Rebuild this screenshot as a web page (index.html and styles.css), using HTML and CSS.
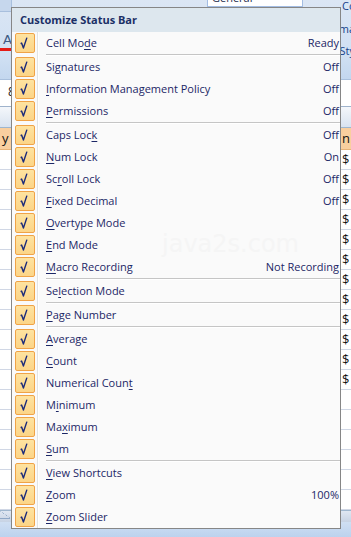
FILE: index.html
```html
<!DOCTYPE html>
<html lang="en">
<head>
  <meta charset="UTF-8">
  <meta name="viewport" content="width=device-width, initial-scale=1.0">
  <title>Customize Status Bar</title>
  <link rel="stylesheet" href="styles.css">
</head>
<body>
  <!-- worksheet behind the context menu -->
  <div class="excel">
    <div class="ribbon">
      <div class="rb-left">
        <div class="rb-btn"></div>
        <div class="font-color">A</div>
        <div class="font-bar"></div>
      </div>
      <div class="rb-mid">
        <div class="combo"><span>General</span><span class="arrow">▼</span></div>
      </div>
      <div class="rb-right">
        <div class="rb-text t1">Conditional Formatting</div>
        <div class="rb-text t2">Format as Table</div>
        <div class="rb-text t3">Cell Styles</div>
      </div>
    </div>

    <div class="formula-row">
      <span class="name-box">8</span>
    </div>
    <div class="col-headers"></div>
    <div class="row head-row">
      <span class="cell-l">y</span>
      <span class="cell-r">n</span>
    </div>
    <div class="row"><span class="cell-l"></span><span class="cell-r">$</span></div>
    <div class="row"><span class="cell-l"></span><span class="cell-r">$</span></div>
    <div class="row"><span class="cell-l"></span><span class="cell-r">$</span></div>
    <div class="row"><span class="cell-l"></span><span class="cell-r">$</span></div>
    <div class="row"><span class="cell-l"></span><span class="cell-r">$</span></div>
    <div class="row"><span class="cell-l"></span><span class="cell-r">$</span></div>
    <div class="row"><span class="cell-l"></span><span class="cell-r">$</span></div>
    <div class="row"><span class="cell-l"></span><span class="cell-r">$</span></div>
    <div class="row"><span class="cell-l"></span><span class="cell-r">$</span></div>
    <div class="row"><span class="cell-l"></span><span class="cell-r">$</span></div>
    <div class="row"><span class="cell-l"></span><span class="cell-r">$</span></div>
    <div class="row"><span class="cell-l"></span><span class="cell-r">$</span></div>
    <div class="row"></div>
    <div class="row"></div>
    <div class="row"></div>
    <div class="row"></div>
    <div class="row"></div>
    <div class="row"></div>
    <div class="tabs-bar"><span class="tab-edge"></span></div>
    <div class="status-bar"></div>
  </div>

  <!-- context menu -->
  <div class="menu">
    <div class="menu-title">Customize Status Bar</div>
    <ul class="menu-list">
      <li class="item"><span class="check"><svg viewBox="0 0 18 18"><path d="M4.6 9.6 L5.6 9.1 L7.4 14 L10.9 3.6"/></svg></span><span class="label">Cell Mo<u>d</u>e</span><span class="value">Ready</span></li>
      <li class="sep"></li>
      <li class="item"><span class="check"><svg viewBox="0 0 18 18"><path d="M4.6 9.6 L5.6 9.1 L7.4 14 L10.9 3.6"/></svg></span><span class="label">Si<u>g</u>natures</span><span class="value">Off</span></li>
      <li class="item"><span class="check"><svg viewBox="0 0 18 18"><path d="M4.6 9.6 L5.6 9.1 L7.4 14 L10.9 3.6"/></svg></span><span class="label"><u>I</u>nformation Management Policy</span><span class="value">Off</span></li>
      <li class="item"><span class="check"><svg viewBox="0 0 18 18"><path d="M4.6 9.6 L5.6 9.1 L7.4 14 L10.9 3.6"/></svg></span><span class="label"><u>P</u>ermissions</span><span class="value">Off</span></li>
      <li class="sep"></li>
      <li class="item"><span class="check"><svg viewBox="0 0 18 18"><path d="M4.6 9.6 L5.6 9.1 L7.4 14 L10.9 3.6"/></svg></span><span class="label">Caps Loc<u>k</u></span><span class="value">Off</span></li>
      <li class="item"><span class="check"><svg viewBox="0 0 18 18"><path d="M4.6 9.6 L5.6 9.1 L7.4 14 L10.9 3.6"/></svg></span><span class="label"><u>N</u>um Lock</span><span class="value">On</span></li>
      <li class="item"><span class="check"><svg viewBox="0 0 18 18"><path d="M4.6 9.6 L5.6 9.1 L7.4 14 L10.9 3.6"/></svg></span><span class="label">Sc<u>r</u>oll Lock</span><span class="value">Off</span></li>
      <li class="item"><span class="check"><svg viewBox="0 0 18 18"><path d="M4.6 9.6 L5.6 9.1 L7.4 14 L10.9 3.6"/></svg></span><span class="label"><u>F</u>ixed Decimal</span><span class="value">Off</span></li>
      <li class="item"><span class="check"><svg viewBox="0 0 18 18"><path d="M4.6 9.6 L5.6 9.1 L7.4 14 L10.9 3.6"/></svg></span><span class="label"><u>O</u>vertype Mode</span></li>
      <li class="item"><span class="check"><svg viewBox="0 0 18 18"><path d="M4.6 9.6 L5.6 9.1 L7.4 14 L10.9 3.6"/></svg></span><span class="label"><u>E</u>nd Mode</span></li>
      <li class="item"><span class="check"><svg viewBox="0 0 18 18"><path d="M4.6 9.6 L5.6 9.1 L7.4 14 L10.9 3.6"/></svg></span><span class="label"><u>M</u>acro Recording</span><span class="value">Not Recording</span></li>
      <li class="sep"></li>
      <li class="item"><span class="check"><svg viewBox="0 0 18 18"><path d="M4.6 9.6 L5.6 9.1 L7.4 14 L10.9 3.6"/></svg></span><span class="label">Se<u>l</u>ection Mode</span></li>
      <li class="sep"></li>
      <li class="item"><span class="check"><svg viewBox="0 0 18 18"><path d="M4.6 9.6 L5.6 9.1 L7.4 14 L10.9 3.6"/></svg></span><span class="label"><u>P</u>age Number</span></li>
      <li class="sep"></li>
      <li class="item"><span class="check"><svg viewBox="0 0 18 18"><path d="M4.6 9.6 L5.6 9.1 L7.4 14 L10.9 3.6"/></svg></span><span class="label"><u>A</u>verage</span></li>
      <li class="item"><span class="check"><svg viewBox="0 0 18 18"><path d="M4.6 9.6 L5.6 9.1 L7.4 14 L10.9 3.6"/></svg></span><span class="label"><u>C</u>ount</span></li>
      <li class="item"><span class="check"><svg viewBox="0 0 18 18"><path d="M4.6 9.6 L5.6 9.1 L7.4 14 L10.9 3.6"/></svg></span><span class="label">Numerical Coun<u>t</u></span></li>
      <li class="item"><span class="check"><svg viewBox="0 0 18 18"><path d="M4.6 9.6 L5.6 9.1 L7.4 14 L10.9 3.6"/></svg></span><span class="label">M<u>i</u>nimum</span></li>
      <li class="item"><span class="check"><svg viewBox="0 0 18 18"><path d="M4.6 9.6 L5.6 9.1 L7.4 14 L10.9 3.6"/></svg></span><span class="label">Ma<u>x</u>imum</span></li>
      <li class="item"><span class="check"><svg viewBox="0 0 18 18"><path d="M4.6 9.6 L5.6 9.1 L7.4 14 L10.9 3.6"/></svg></span><span class="label"><u>S</u>um</span></li>
      <li class="sep"></li>
      <li class="item"><span class="check"><svg viewBox="0 0 18 18"><path d="M4.6 9.6 L5.6 9.1 L7.4 14 L10.9 3.6"/></svg></span><span class="label"><u>V</u>iew Shortcuts</span></li>
      <li class="item"><span class="check"><svg viewBox="0 0 18 18"><path d="M4.6 9.6 L5.6 9.1 L7.4 14 L10.9 3.6"/></svg></span><span class="label"><u>Z</u>oom</span><span class="value">100%</span></li>
      <li class="item"><span class="check"><svg viewBox="0 0 18 18"><path d="M4.6 9.6 L5.6 9.1 L7.4 14 L10.9 3.6"/></svg></span><span class="label"><u>Z</u>oom Slider</span></li>
    </ul>
    <div class="watermark">java2s.com</div>
  </div>
</body>
</html>
```

FILE: styles.css
```css
* {
  margin: 0;
  padding: 0;
  box-sizing: border-box;
}

body {
  width: 351px;
  height: 537px;
  overflow: hidden;
  position: relative;
  font-family: "Open Sans", "Noto Sans", sans-serif;
  background: #fff;
}

/* ---------- worksheet ---------- */

.excel {
  display: flex;
  flex-direction: column;
  height: 537px;
}

.ribbon {
  height: 80px;
  display: grid;
  grid-template-columns: 12px 1fr 11px;
  background: linear-gradient(#dbe6f4, #d0e0f3 70%, #c3d7ef);
  border-bottom: 1px solid #a9c0dd;
  overflow: hidden;
}

.rb-btn {
  height: 12px;
  background: #c6d7ed;
  border-bottom: 1px solid #a8bfdd;
  border-right: 1px solid #a8bfdd;
}

.font-color {
  margin-top: 20px;
  padding-left: 3px;
  font-family: "DejaVu Sans", sans-serif;
  font-size: 13px;
  line-height: 16px;
  color: #3e5b86;
}

.font-bar {
  height: 3px;
  background: #e41b17;
}

.combo {
  margin: -10px 0 0 195px;
  width: 96px;
  height: 17px;
  display: flex;
  justify-content: space-between;
  padding: 0 4px;
  background: #fff;
  border: 1px solid #a3bde3;
  font-size: 11px;
  line-height: 14px;
  color: #1d2c4d;
}

.combo .arrow {
  font-size: 7px;
  color: #3b4f6c;
}

.rb-right {
  overflow: hidden;
  white-space: nowrap;
  font-size: 11px;
  line-height: 12px;
  color: #15428b;
}

.rb-text.t1 { text-indent: 2px; }
.rb-text.t2 { margin-top: 11px; text-indent: -18px; }
.rb-text.t3 { margin-top: 10px; text-indent: -22px; }

.formula-row {
  height: 27px;
  background: #fff;
  border-bottom: 1px solid #9fb3cc;
  font-size: 12px;
  line-height: 24px;
}

.name-box {
  padding-left: 8px;
  color: #222;
}

.col-headers {
  height: 21px;
  background: linear-gradient(#f4f7fb, #d9e3f0);
  border-bottom: 1px solid #9eb6ce;
}

.row {
  height: 20px;
  display: flex;
  justify-content: space-between;
  border-bottom: 1px solid #d0d7e5;
  font-size: 13px;
  line-height: 19px;
  color: #111;
}

.row.head-row {
  height: 22px;
  background: #f9cf9f;
  border-bottom-color: #e8b47a;
  line-height: 20px;
}

.cell-l {
  padding-left: 2px;
}

.cell-r {
  width: 11px;
  padding-left: 2px;
}

.tabs-bar {
  height: 12px;
  background: linear-gradient(#dfe7f2, #c7d3e4);
  border-top: 1px solid #9eb6ce;
}

.tab-edge {
  display: block;
  width: 10px;
  height: 8px;
  border-bottom: 1px solid #8ea7c6;
  background: linear-gradient(to top right, transparent 48%, #8ea7c6 50%, transparent 54%);
}

.status-bar {
  height: 15px;
  background: linear-gradient(#cfdff3, #bcd2ee);
}

/* ---------- context menu ---------- */

.menu {
  position: absolute;
  left: 11px;
  top: 7px;
  width: 330px;
  height: 522px;
  border: 1px solid #868686;
  background: #fafafa;
  overflow: hidden;
  font-size: 11px;
  color: #1c2766;
}

.menu-title {
  height: 24px;
  padding-left: 8px;
  background: #dde7ee;
  font-weight: 700;
  line-height: 23px;
  color: #1b2f66;
}

.menu-list {
  list-style: none;
  background:
    linear-gradient(to right, transparent 25px, #e2e3e3 25px, #e2e3e3 26px, #fff 26px, #fff 27px, transparent 27px),
    #fafafa;
}

.item {
  height: 22px;
  display: flex;
  align-items: center;
}

.check {
  width: 20px;
  height: 20px;
  margin-left: 3px;
  border: 1px solid #f0a347;
  border-radius: 2px;
  background: linear-gradient(#fee3a0, #fcd588);
}

.check svg {
  display: block;
  width: 18px;
  height: 18px;
  fill: none;
  stroke: #1b2a7a;
  stroke-width: 1.4;
  stroke-linejoin: round;
}

.label {
  margin-left: 11px;
  line-height: 20px;
  white-space: nowrap;
}

.label u {
  text-underline-offset: 2px;
}

.value {
  margin-left: auto;
  padding-right: 1px;
  line-height: 20px;
  white-space: nowrap;
}

.sep {
  height: 2px;
  margin-left: 34px;
  border-top: 1px solid #c5c5c5;
  border-bottom: 1px solid #fff;
}

.watermark {
  position: absolute;
  left: 150px;
  top: 222px;
  font-family: "DejaVu Sans", sans-serif;
  font-size: 24px;
  color: #f5f5f5;
}
```
